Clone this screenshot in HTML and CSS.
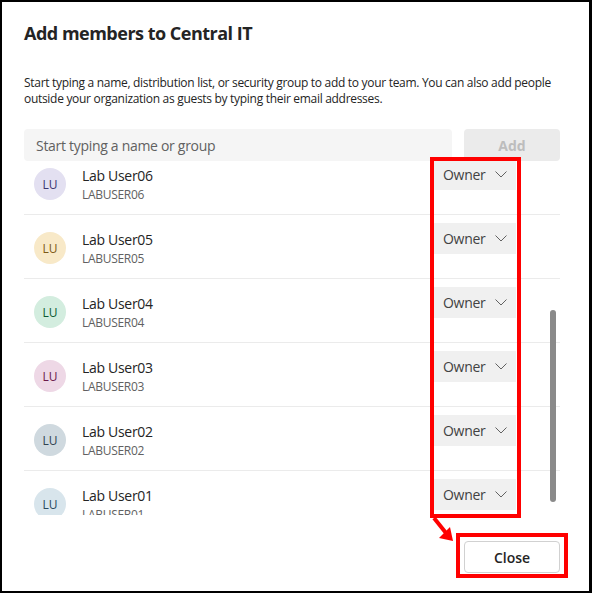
FILE: index.html
```html
<!DOCTYPE html>
<html>
<head>
<meta charset="utf-8">
<link rel="stylesheet" href="styles.css">
</head>
<body>
<div class="frame">
  <div class="dialog">
    <h1 class="title">Add members to Central IT</h1>
    <p class="desc">Start typing a name, distribution list, or security group to add to your team. You can also add people outside your organization as guests by typing their email addresses.</p>
    <div class="search">
      <div class="input">Start typing a name or group</div>
      <div class="add-btn">Add</div>
    </div>
    <div class="list">
      <div class="rows">
        <div class="row">
          <div class="avatar av-lavender">LU</div>
          <div class="info"><div class="name">Lab User06</div><div class="sub">LABUSER06</div></div>
          <div class="role">Owner<svg class="chev" width="12" height="7" viewBox="0 0 12 7"><path d="M0.5 0.5 L6 6 L11.5 0.5" fill="none" stroke="#616161" stroke-width="1"/></svg></div>
        </div>
        <div class="row">
          <div class="avatar av-yellow">LU</div>
          <div class="info"><div class="name">Lab User05</div><div class="sub">LABUSER05</div></div>
          <div class="role">Owner<svg class="chev" width="12" height="7" viewBox="0 0 12 7"><path d="M0.5 0.5 L6 6 L11.5 0.5" fill="none" stroke="#616161" stroke-width="1"/></svg></div>
        </div>
        <div class="row">
          <div class="avatar av-green">LU</div>
          <div class="info"><div class="name">Lab User04</div><div class="sub">LABUSER04</div></div>
          <div class="role">Owner<svg class="chev" width="12" height="7" viewBox="0 0 12 7"><path d="M0.5 0.5 L6 6 L11.5 0.5" fill="none" stroke="#616161" stroke-width="1"/></svg></div>
        </div>
        <div class="row">
          <div class="avatar av-pink">LU</div>
          <div class="info"><div class="name">Lab User03</div><div class="sub">LABUSER03</div></div>
          <div class="role">Owner<svg class="chev" width="12" height="7" viewBox="0 0 12 7"><path d="M0.5 0.5 L6 6 L11.5 0.5" fill="none" stroke="#616161" stroke-width="1"/></svg></div>
        </div>
        <div class="row">
          <div class="avatar av-steel">LU</div>
          <div class="info"><div class="name">Lab User02</div><div class="sub">LABUSER02</div></div>
          <div class="role">Owner<svg class="chev" width="12" height="7" viewBox="0 0 12 7"><path d="M0.5 0.5 L6 6 L11.5 0.5" fill="none" stroke="#616161" stroke-width="1"/></svg></div>
        </div>
        <div class="row">
          <div class="avatar av-blue">LU</div>
          <div class="info"><div class="name">Lab User01</div><div class="sub">LABUSER01</div></div>
          <div class="role">Owner<svg class="chev" width="12" height="7" viewBox="0 0 12 7"><path d="M0.5 0.5 L6 6 L11.5 0.5" fill="none" stroke="#616161" stroke-width="1"/></svg></div>
        </div>
      </div>
      <div class="scrollbar"></div>
    </div>
    <div class="footer">
      <div class="close-btn">Close</div>
    </div>
  </div>
  <div class="mark mark-roles"></div>
  <div class="mark mark-close"></div>
  <svg class="arrow" width="40" height="40" viewBox="0 0 40 40">
    <line x1="9" y1="8" x2="21" y2="23" stroke="#ff0000" stroke-width="4"/>
    <polygon points="14,28 28,31 25,17" fill="#ff0000"/>
  </svg>
</div>
</body>
</html>
```

FILE: styles.css
```css
* { box-sizing: border-box; }
html, body { margin: 0; padding: 0; background: #fff; }
body { font-family: "Segoe UI", "Open Sans", sans-serif; color: #242424; }

.frame {
  position: relative;
  width: 592px;
  height: 593px;
  border: 2px solid #000;
  border-right-width: 3px;
  background: #fff;
  overflow: hidden;
}

.dialog {
  display: flex;
  flex-direction: column;
  padding: 19px 29px 0 22px;
}

.title {
  margin: 0;
  font-size: 18px;
  line-height: 24px;
  font-weight: 700;
  letter-spacing: -0.5px;
}

.desc {
  margin: 30px 0 0;
  font-size: 12px;
  line-height: 16px;
  letter-spacing: -0.3px;
}

.search {
  display: flex;
  gap: 12px;
  margin-top: 22px;
  height: 32px;
}
.input {
  flex: 1;
  background: #f5f5f5;
  border-radius: 4px;
  padding: 0 12px;
  display: flex;
  align-items: center;
  font-size: 14px;
  color: #616161;
  letter-spacing: -0.3px;
}
.add-btn {
  width: 96px;
  background: #ebebeb;
  border-radius: 4px;
  display: flex;
  align-items: center;
  justify-content: center;
  font-size: 14px;
  font-weight: 700;
  color: #bdbdbd;
}

.list {
  position: relative;
  height: 354px;
  overflow: hidden;
}
.rows { margin-top: -10px; }
.row {
  display: flex;
  align-items: center;
  height: 64px;
  padding: 3px 44px 0 10px;
  border-bottom: 1px solid #ebebeb;
}
.avatar {
  width: 32px;
  height: 32px;
  border-radius: 50%;
  display: flex;
  align-items: center;
  justify-content: center;
  font-size: 12px;
  font-weight: 500;
  flex: none;
}
.av-lavender { background: #e3e0f1; color: #3b3670; }
.av-yellow { background: #f8e9c8; color: #7c5a16; }
.av-green { background: #d3eddf; color: #0c5b32; }
.av-pink { background: #eed8e6; color: #6b1a4b; }
.av-steel { background: #cfd9df; color: #2f4350; }
.av-blue { background: #d8e5ec; color: #294a5d; }

.info { flex: 1; margin-left: 16px; }
.name { font-size: 14px; line-height: 20px; letter-spacing: -0.3px; }
.sub { font-size: 12px; line-height: 17px; color: #616161; letter-spacing: -0.3px; }

.role {
  align-self: flex-start;
  margin-top: 5px;
  width: 82px;
  height: 31px;
  background: #f0f0f0;
  display: flex;
  align-items: center;
  justify-content: space-between;
  padding: 0 9px;
  font-size: 14px;
  color: #424242;
  letter-spacing: -0.3px;
}
.chev { flex: none; }

.scrollbar {
  position: absolute;
  left: 526px;
  top: 149px;
  width: 6px;
  height: 192px;
  border-radius: 3px;
  background: #8a8a8a;
}

.footer {
  display: flex;
  justify-content: flex-end;
  margin-top: 26px;
}
.close-btn {
  width: 96px;
  height: 32px;
  border: 1px solid #d1d1d1;
  border-radius: 4px;
  display: flex;
  align-items: center;
  justify-content: center;
  font-size: 14px;
  font-weight: 600;
  color: #242424;
}

.mark {
  position: absolute;
  border: 4px solid #ff0000;
}
.mark-roles { left: 428px; top: 155px; width: 91px; height: 361px; }
.mark-close { left: 454px; top: 531px; width: 112px; height: 45px; }
.arrow { position: absolute; left: 423px; top: 508px; }
```
